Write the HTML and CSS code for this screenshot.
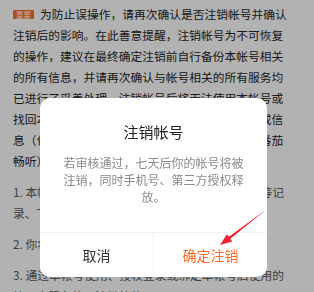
FILE: index.html
```html
<!DOCTYPE html>
<html lang="zh-CN">
<head>
    <meta charset="UTF-8">
    <meta name="viewport" content="width=device-width, initial-scale=1.0">
    <title>注销帐号</title>
    <link rel="stylesheet" href="styles.css">
</head>
<body>
    <div class="notice">
        <p class="notice-lead"><span class="tag">重要</span>为防止误操作，请再次确认是否注销帐号并确认注销后的影响。在此善意提醒，注销帐号为不可恢复的操作，建议在最终确定注销前自行备份本帐号相关的所有信息，并请再次确认与帐号相关的所有服务均已进行了妥善处理。注销帐号后将无法使用本帐号或找回本帐号中及与本帐号相关的任何内容、数据或信息（包括但不限于阅读记录、书架、番茄小说、番茄畅听）中的所有内容和数据。</p>
        <p class="notice-item">1. 本帐号下的个人资料、书架、阅读历史、评论等记录、下载内容等将被清空。</p>
        <p class="notice-item">2. 你将无法再登录、使用本帐号。</p>
        <p class="notice-item">3. 通过本帐号使用、授权登录或绑定本帐号后使用的第三方服务将无法继续使用。</p>
    </div>

    <div class="mask">
        <div class="dialog">
            <h2 class="dialog-title">注销帐号</h2>
            <p class="dialog-text">若审核通过，七天后你的帐号将被注销，同时手机号、第三方授权释放。</p>
            <div class="dialog-actions">
                <button class="dialog-btn">取消</button>
                <button class="dialog-btn dialog-btn-primary">确定注销</button>
            </div>
        </div>
    </div>

    <!-- annotation arrow pointing at the confirm button -->
    <svg class="mark" viewBox="0 0 314 292" width="314" height="292">
        <polygon fill="#f5222d" points="220,245 226.9,234.2 228.9,236.8 267,209 230.3,238.8 232.3,241.4"/>
    </svg>
</body>
</html>
```

FILE: styles.css
```css
* {
    margin: 0;
    padding: 0;
    box-sizing: border-box;
}

body {
    font-family: "Noto Sans CJK SC", "Noto Sans", sans-serif;
    background: #fff;
    width: 314px;
    height: 292px;
    overflow: hidden;
}

.notice {
    padding: 3px 27px 0 13px;
    font-size: 11.75px;
    line-height: 21px;
}

.notice p {
    margin-bottom: 10px;
}

.notice-lead {
    color: #262626;
}

.notice-item {
    color: #5a5a5a;
}

.tag {
    display: inline-block;
    height: 9px;
    line-height: 9px;
    padding: 0 3px;
    margin-right: 6px;
    font-size: 7.5px;
    color: #fff;
    background: #ff6d2a;
    border-radius: 1px;
    vertical-align: 1px;
}

.mask {
    position: fixed;
    top: 0;
    left: 0;
    right: 0;
    bottom: 0;
    background: rgba(0, 0, 0, 0.3);
    padding: 98px 0 0 40px;
}

.dialog {
    width: 227px;
    height: 179px;
    background: #fff;
    border-radius: 10px;
    display: flex;
    flex-direction: column;
    overflow: hidden;
}

.dialog-title {
    margin-top: 23px;
    font-size: 15px;
    line-height: 22px;
    font-weight: normal;
    color: #222;
    text-align: center;
}

.dialog-text {
    margin-top: 11px;
    padding: 0 22px;
    font-size: 12px;
    line-height: 17px;
    color: #8a8a8a;
    text-align: center;
}

.dialog-actions {
    margin-top: auto;
    height: 45px;
    display: flex;
    border-top: 1px solid #f2f2f2;
}

.dialog-btn {
    flex: 1;
    border: none;
    background: none;
    font-family: inherit;
    font-size: 14px;
    color: #333;
}

.dialog-btn + .dialog-btn {
    border-left: 1px solid #f2f2f2;
}

.dialog-btn-primary {
    color: #fa6a22;
}

.mark {
    position: fixed;
    top: 0;
    left: 0;
    pointer-events: none;
}
```
